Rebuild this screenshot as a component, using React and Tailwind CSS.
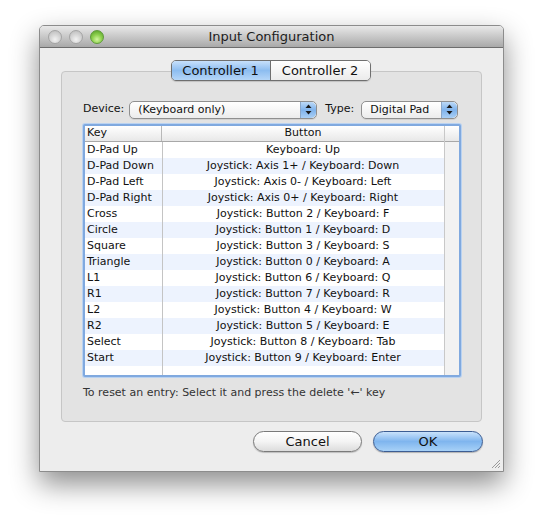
import React from "react";

const rows = [
  ["D-Pad Up", "Keyboard: Up"],
  ["D-Pad Down", "Joystick: Axis 1+ / Keyboard: Down"],
  ["D-Pad Left", "Joystick: Axis 0- / Keyboard: Left"],
  ["D-Pad Right", "Joystick: Axis 0+ / Keyboard: Right"],
  ["Cross", "Joystick: Button 2 / Keyboard: F"],
  ["Circle", "Joystick: Button 1 / Keyboard: D"],
  ["Square", "Joystick: Button 3 / Keyboard: S"],
  ["Triangle", "Joystick: Button 0 / Keyboard: A"],
  ["L1", "Joystick: Button 6 / Keyboard: Q"],
  ["R1", "Joystick: Button 7 / Keyboard: R"],
  ["L2", "Joystick: Button 4 / Keyboard: W"],
  ["R2", "Joystick: Button 5 / Keyboard: E"],
  ["Select", "Joystick: Button 8 / Keyboard: Tab"],
  ["Start", "Joystick: Button 9 / Keyboard: Enter"],
];

const Light = ({ color }) => (
  <div
    className={
      "w-[14px] h-[14px] rounded-full border " +
      (color === "green"
        ? "border-[#5f9a3a] bg-[radial-gradient(circle_at_50%_70%,#d2f5a0,#8fd14f_45%,#4f9a22)]"
        : "border-[#a4a4a4] bg-[radial-gradient(circle_at_50%_70%,#f2f2f2,#d4d4d4_50%,#b8b8b8)]")
    }
  />
);

const Arrows = () => (
  <div className="w-[16px] h-full flex items-center justify-center rounded-r-[5px] bg-gradient-to-b from-[#bcd9f7] via-[#7fb3ec] to-[#a9cff5] border-l border-[#8aa6c8]">
    <svg width="7" height="11" viewBox="0 0 7 11">
      <path d="M3.5 0.5 L6.5 4 L0.5 4 Z" fill="#1a1a1a" />
      <path d="M3.5 10.5 L6.5 7 L0.5 7 Z" fill="#1a1a1a" />
    </svg>
  </div>
);

const Popup = ({ label, width }) => (
  <div
    className={
      "h-[18px] flex items-center rounded-[5px] border border-[#8f8f8f] bg-gradient-to-b from-white to-[#ececec] shadow-[0_1px_0_rgba(0,0,0,0.08)] " +
      width
    }
  >
    <span className="flex-1 pl-[8px] text-[11px] text-[#111] leading-none">{label}</span>
    <Arrows />
  </div>
);

export default function App() {
  return (
    <div
      className="w-[543px] h-[526px] bg-white pl-[39px] pt-[25px]"
      style={{ fontFamily: '"DejaVu Sans", "Liberation Sans", sans-serif' }}
    >
      <div className="w-[465px] h-[447px] flex flex-col border border-[#8c8c8c] rounded-t-[5px] shadow-[0_12px_28px_rgba(0,0,0,0.45)] bg-[#ededed] overflow-hidden">
        {/* title bar */}
        <div className="h-[22px] shrink-0 flex items-center border-b border-[#6d6d6d] bg-gradient-to-b from-[#e9e9e9] to-[#a9a9a9] px-[8px] relative">
          <div className="flex gap-[7px]">
            <Light />
            <Light />
            <Light color="green" />
          </div>
          <div className="flex-1 text-center text-[13px] text-[#1c1c1c] pr-[56px]">
            Input Configuration
          </div>
        </div>

        {/* body */}
        <div className="flex-1 flex flex-col px-[20px] pt-[12px] relative">
          <div className="flex justify-center -mb-[10px] relative z-10 pr-[2px]">
            <div className="flex h-[21px] rounded-[5px] border border-[#6f6f6f] overflow-hidden shadow-[0_1px_1px_rgba(0,0,0,0.15)]">
              <div className="w-[99px] flex items-center justify-center text-[13px] text-[#111] bg-gradient-to-b from-[#c7e0fb] via-[#8dbdf0] to-[#b5d6f8] border-r border-[#6f6f6f]">
                Controller 1
              </div>
              <div className="w-[99px] flex items-center justify-center text-[13px] text-[#111] bg-gradient-to-b from-white to-[#ebebeb]">
                Controller 2
              </div>
            </div>
          </div>

          <div className="h-[351px] ml-[1px] mr-[1px] rounded-[4px] border border-[#c6c6c6] bg-[#e3e3e3] px-[21px] pt-[28px]">
            <div className="flex items-center h-[19px] text-[11px] text-[#111]">
              <span className="mr-[5px]">Device:</span>
              <Popup label="(Keyboard only)" width="w-[188px]" />
              <span className="ml-[8px] mr-[7px]">Type:</span>
              <Popup label="Digital Pad" width="w-[97px]" />
            </div>

            <div className="mt-[5px] w-[378px] h-[253px] rounded-[2px] border-[2px] border-[#80a9df] shadow-[0_0_0_1px_#b9d2f1] bg-white overflow-hidden">
              <div className="h-full flex text-[11px] text-[#111]">
                <div className="flex-1 flex flex-col">
                  <div className="h-[16px] flex border-b border-[#a8a8a8] bg-gradient-to-b from-white to-[#e8e8e8]">
                    <div className="w-[77px] pl-[2px] border-r border-[#b8b8b8] flex items-center">Key</div>
                    <div className="flex-1 flex items-center justify-center">Button</div>
                  </div>
                  <div className="flex-1 flex flex-col relative">
                    {rows.map(([k, b], i) => (
                      <div
                        key={k}
                        className={"h-[16px] flex items-center " + (i % 2 ? "bg-[#edf3fe]" : "bg-white")}
                      >
                        <div className="w-[77px] pl-[2px]">{k}</div>
                        <div className="flex-1 text-center">{b}</div>
                      </div>
                    ))}
                    <div className="absolute left-[77px] top-0 bottom-0 w-px bg-[#c4c4c4]" />
                  </div>
                </div>
                <div className="w-[15px] flex flex-col border-l border-[#c8c8c8]">
                  <div className="h-[16px] border-b border-[#a8a8a8] bg-gradient-to-b from-white to-[#e8e8e8]" />
                  <div className="flex-1 bg-[#f2f2f2]" />
                </div>
              </div>
            </div>

            <div className="mt-[8px] text-[11px] text-[#333]">
              To reset an entry: Select it and press the delete '&larr;' key
            </div>
          </div>

          <div className="flex justify-end gap-[11px] mt-[9px]">
            <div className="w-[109px] h-[21px] rounded-full border border-[#7a7a7a] bg-gradient-to-b from-white via-[#f4f4f4] to-[#dcdcdc] flex items-center justify-center text-[13px] text-[#111] shadow-[0_1px_1px_rgba(0,0,0,0.2)]">
              Cancel
            </div>
            <div className="w-[110px] h-[21px] rounded-full border border-[#3c5d93] bg-gradient-to-b from-[#c9e2fb] via-[#7fb5ee] to-[#a7d1f7] flex items-center justify-center text-[13px] text-[#111] shadow-[0_1px_1px_rgba(0,0,0,0.25)]">
              OK
            </div>
          </div>

          <svg className="absolute right-[2px] bottom-[2px]" width="11" height="11" viewBox="0 0 11 11">
            <path d="M10 2 L2 10 M10 5 L5 10 M10 8 L8 10" stroke="#9a9a9a" strokeWidth="1" />
          </svg>
        </div>
      </div>
    </div>
  );
}
